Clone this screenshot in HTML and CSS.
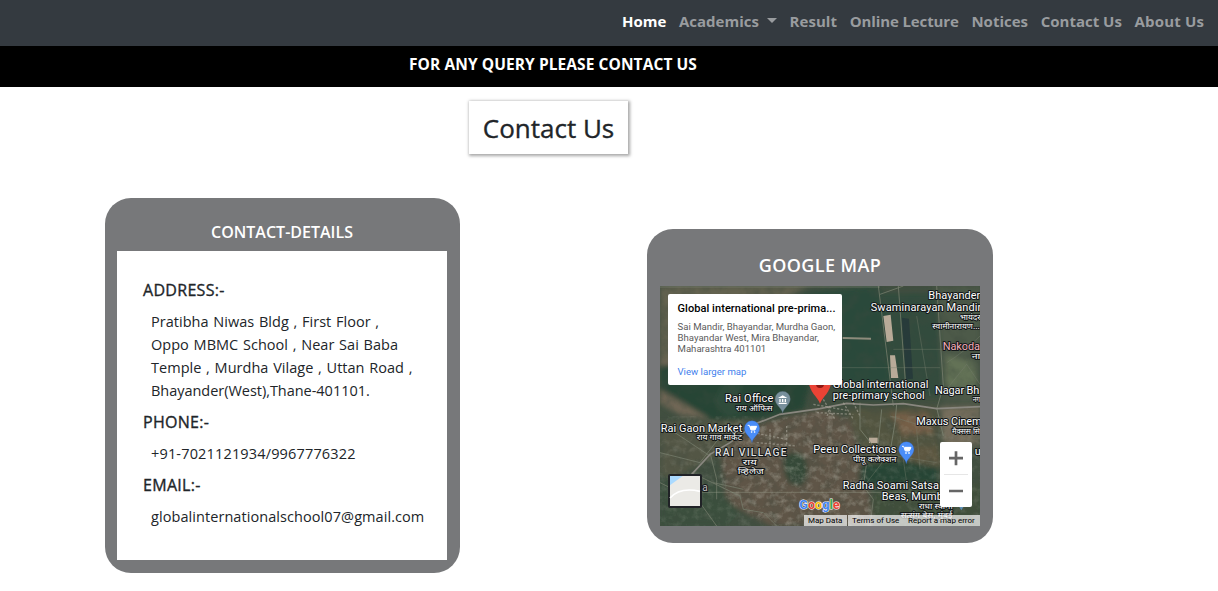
FILE: index.html
```html
<!DOCTYPE html>
<html lang="en">
<head>
<meta charset="utf-8">
<title>Contact Us</title>
<link rel="stylesheet" href="styles.css">
</head>
<body>
<nav class="navbar">
  <a class="nav-link active">Home</a>
  <a class="nav-link dropdown">Academics</a>
  <a class="nav-link result">Result</a>
  <a class="nav-link lecture">Online Lecture</a>
  <a class="nav-link notices">Notices</a>
  <a class="nav-link contact">Contact Us</a>
  <a class="nav-link about">About Us</a>
</nav>
<div class="banner"><span>FOR ANY QUERY PLEASE CONTACT US</span></div>
<main class="page">
  <h2 class="title">Contact Us</h2>
  <div class="cards">
    <section class="card details">
      <h5 class="card-title">CONTACT-DETAILS</h5>
      <div class="details-body">
        <h6 class="label">ADDRESS:-</h6>
        <p class="text address">Pratibha Niwas Bldg , First Floor ,<br>Oppo MBMC School , Near Sai Baba<br>Temple , Murdha Vilage , Uttan Road ,<br><span class="city">Bhayander(West),Thane-401101.</span></p>
        <h6 class="label">PHONE:-</h6>
        <p class="text phone">+91-7021121934/9967776322</p>
        <h6 class="label">EMAIL:-</h6>
        <p class="text email">globalinternationalschool07@gmail.com</p>
      </div>
    </section>
    <section class="card map-card">
      <h5 class="card-title map-title">GOOGLE MAP</h5>
      <div class="map">
        <svg class="map-svg" viewBox="0 0 960 720" width="320" height="240">
          <defs>
            <filter id="soft" x="-10%" y="-10%" width="120%" height="120%"><feGaussianBlur stdDeviation="8"/></filter>
            <filter id="rough" x="0" y="0" width="100%" height="100%">
              <feTurbulence type="fractalNoise" baseFrequency="0.025" numOctaves="5" seed="7"/>
              <feColorMatrix values="0 0 0 0 0.05  0 0 0 0 0.07  0 0 0 0 0.05  2.2 0 0 0 -0.9"/>
            </filter>
            <filter id="grain" x="0" y="0" width="100%" height="100%">
              <feTurbulence type="fractalNoise" baseFrequency="0.05" numOctaves="4" seed="3"/>
              <feColorMatrix values="0 0 0 0 0.6  0 0 0 0 0.6  0 0 0 0 0.52  0 2 0 0 -0.9"/>
            </filter>
            <clipPath id="brown"><path d="M270 420 480 370 570 400 620 560 640 720 330 720 200 650 170 520z"/></clipPath>
            <g id="cart" fill="none" stroke="#fff" stroke-width="3"><path d="M-13-10h5l5 14h12l5-11h-18"/><path d="M-5-6h17l-3 8H-3z" fill="#fff"/><circle cx="-1" cy="10" r="1.5"/><circle cx="8" cy="10" r="1.5"/></g>
            <path id="pin" d="M0 42C-3 25-23 17-23-1a23 23 0 0 1 46 0C23 17 3 25 0 42z"/>
          </defs>
          <rect width="960" height="720" fill="#414f40"/>
          <g filter="url(#soft)">
            <path d="M0 0H450L380 30 0 290z" fill="#64624f"/>
            <path d="M0 220 60 235 30 300 180 400 60 390 0 350z" fill="#6f6655"/>
            <path d="M0 240 330 200 450 300 430 370 290 400 170 410 0 310z" fill="#264534"/>
            <path d="M190 290h60l-20 60 30 30-60 15-40-50z" fill="#2f4b3a"/>
            <path d="M410 20 660 0 700 340 540 340 540 60z" fill="#2c4a3a"/>
            <path d="M660 20H830L850 330 710 330z" fill="#304c3d"/>
            <path d="M830 0H960V350H850z" fill="#4d5a48"/>
            <path d="M860 210 940 230 950 310 860 300z" fill="#637257"/>
            <path d="M0 410 290 400 170 510 0 600z" fill="#525645"/>
            <path d="M270 420 480 370 570 400 620 560 640 720 330 720 200 650 180 500z" fill="#5e5546"/>
            <path d="M560 370 830 360 840 500 650 560 610 500z" fill="#525440"/>
            <path d="M690 380h110l20 60-90 10z" fill="#745e47"/>
            <path d="M720 480h110l20 60H740z" fill="#5b563f"/>
            <path d="M600 540 720 520 830 545 830 590 600 600z" fill="#274536"/>
            <path d="M370 510q60-30 70 20t-20 70q-55 0-50-90z" fill="#344a39"/>
            <path d="M0 570 160 590 240 680 200 720H0z" fill="#3a503c"/>
            <path d="M640 620 960 590V720H640z" fill="#414f3b"/>
            <path d="M840 360H960V480H850z" fill="#746d5c"/>
          </g>
          <rect width="960" height="720" filter="url(#rough)" opacity=".4"/>
          <g clip-path="url(#brown)"><rect width="960" height="720" filter="url(#grain)" opacity=".25"/></g>
          <rect y="390" width="960" height="330" filter="url(#grain)" opacity=".17"/>
          <g fill="#b8aa98">
            <path d="M670 90l22-4 8 78-20 4zM690 208h15l10 68h-22z"/>
            <path d="M627 455h26v16h-26z"/>
            <path d="M548 153l85 2v6l-85-2z" opacity=".7"/>
          </g>
          <path d="M725 95l22 3 12 180-20 2z" fill="#1f3138" opacity=".6"/>
          <g fill="none" stroke="#79806f" stroke-width="3">
            <path d="M655 0 690 280 700 360M715 0 740 340M830 0 850 300 830 370M660 25 730 0" opacity=".75"/>
            <path d="M540 245H840M700 190H850M770 90 810 330M860 230q50-30 100-80M860 310l60-75 40 60" opacity=".4"/>
            <path d="M600 350 600 430 640 480M665 370 655 470 640 500M710 355 705 410 690 500M830 365 850 450" opacity=".85"/>
            <path d="M690 390 820 430M650 500 830 530M720 450 740 590M770 430 780 550M690 500 620 590" opacity=".4"/>
            <path d="M0 410 150 510M0 500 120 530 190 440M150 500 170 580 170 640M95 560 240 630 250 670 310 680 350 720M620 530 610 600 640 640 630 720M160 590 250 610M0 590 120 650 170 720" opacity=".7"/>
          </g>
          <path d="M0 3H660M110 619H840" stroke="#a6aa98" stroke-width="2" opacity=".55"/>
          <path d="M95 565 150 505 210 470 290 412 360 385 480 368 560 352 640 357 730 353 830 368 960 362" fill="none" stroke="#89877f" stroke-width="5"/>
          <path d="M460 355l100 18M490 340l35 60M550 350l30 50M510 360l-10 35M580 350l20 40M470 380l110 5M280 440l100 20M290 470l120 10M330 430v60M380 420v60" stroke="#a9a69a" stroke-width="4" stroke-dasharray="7 5" opacity=".6"/>

          <path d="M480 353C474 333 447 318 447 287H513C513 318 486 333 480 353z" fill="#ea4335"/>
          <circle cx="480" cy="294" r="12" fill="#8c1713"/>
          <g fill="#78909c" stroke="#475861" stroke-width="1"><use href="#pin" x="368" y="340"/></g>
          <path d="M354 336 368 328 382 336zM356 350h24v4h-24zM358 339h4v9h-4zM366 339h4v9h-4zM374 339h4v9h-4z" fill="#fff"/>
          <g fill="#4a8df8" stroke="#2f5fae" stroke-width="1"><use href="#pin" x="276" y="428"/><use href="#pin" x="739" y="491"/></g>
          <use href="#cart" x="276" y="428"/><use href="#cart" x="739" y="491"/>

          <g class="place">
            <text x="805" y="40" textLength="156">Bhayander</text>
            <text x="632" y="74" textLength="332">Swaminarayan Mandir</text>
            <text x="848" y="192" textLength="112" class="pink">Nakoda</text>
            <text x="518" y="306" textLength="287">Global international</text>
            <text x="518" y="340" textLength="276">pre-primary school</text>
            <text x="825" y="324" textLength="133">Nagar Bh</text>
            <text x="195" y="348" textLength="145">Rai Office</text>
            <text x="2" y="437" textLength="245">Rai Gaon Market</text>
            <text x="165" y="510" textLength="215" class="village">RAI VILLAGE</text>
            <text x="460" y="502" textLength="249">Peeu Collections</text>
            <text x="769" y="417" textLength="196">Maxus Cinem</text>
            <text x="548" y="609" textLength="289">Radha Soami Satsa</text>
            <text x="665" y="643" textLength="184">Beas, Mumb</text>
            <text x="127" y="615" class="plain">a</text>
            <text x="944" y="506">u</text>
          </g>
          <g class="place hindi">
            <text x="900" y="102" textLength="62" lengthAdjust="spacingAndGlyphs">भायंदर</text>
            <text x="817" y="129" textLength="142" lengthAdjust="spacingAndGlyphs">स्वामीनारायण...</text>
            <text x="935" y="219" textLength="26" lengthAdjust="spacingAndGlyphs">ना</text>
            <text x="938" y="348" textLength="22" lengthAdjust="spacingAndGlyphs">नग</text>
            <text x="228" y="375" textLength="110" lengthAdjust="spacingAndGlyphs">राय ऑफिस</text>
            <text x="110" y="462" textLength="136" lengthAdjust="spacingAndGlyphs">राय गाव मार्केट</text>
            <text x="248" y="536" textLength="42" lengthAdjust="spacingAndGlyphs">राय</text>
            <text x="233" y="563" textLength="78" lengthAdjust="spacingAndGlyphs">व्हिलेज</text>
            <text x="579" y="527" textLength="130" lengthAdjust="spacingAndGlyphs">पीयू कलेक्शन</text>
            <text x="876" y="444" textLength="84" lengthAdjust="spacingAndGlyphs">मैक्सस सि</text>
            <text x="776" y="670" textLength="102" lengthAdjust="spacingAndGlyphs">राधा स्वामी</text>
            <text x="722" y="697" textLength="155" lengthAdjust="spacingAndGlyphs">सत्संग बेस, मुंबई</text>
          </g>
          <path d="M898 663h12l-6 10z" fill="#5d8fb5"/>
          <text class="logo" x="418" y="670" textLength="121" lengthAdjust="spacingAndGlyphs"><tspan fill="#4285f4">G</tspan><tspan fill="#ea4335">o</tspan><tspan fill="#fbbc05">o</tspan><tspan fill="#4285f4">g</tspan><tspan fill="#34a853">l</tspan><tspan fill="#ea4335">e</tspan></text>
          <rect x="24" y="564" width="102" height="102" rx="6" fill="#202226"/>
          <path d="M30 570h90v90H30z" fill="#ebeae6"/>
          <path d="M30 570h38L30 598z" fill="#aadaff"/>
          <path d="M30 636Q60 602 120 616" fill="none" stroke="#fff" stroke-width="5"/>
        </svg>
        <div class="info">
          <div class="info-name">Global international pre-prima...</div>
          <div class="info-address">Sai Mandir, Bhayandar, Murdha Gaon,<br>Bhayandar West, Mira Bhayandar,<br>Maharashtra 401101</div>
          <a class="info-link">View larger map</a>
        </div>
        <div class="zoom">
          <svg viewBox="0 0 32 65" width="32" height="65"><path d="M9 16.200h14M16 9.200v14M9 49h14" stroke="#666" stroke-width="2.700" fill="none"/><path d="M4 32.500h24" stroke="#e6e6e6"/></svg>
        </div>
        <div class="legal"><span class="lg1">Map Data</span><span class="lg2">Terms of Use</span><span class="lg3">Report a map error</span></div>
      </div>
    </section>
  </div>
</main>
</body>
</html>
```
FILE: styles.css
```css
* { box-sizing: border-box; }
body {
  margin: 0;
  height: 591px;
  overflow: hidden;
  background: #fff;
  color: #212529;
  font-family: "Open Sans", "Noto Sans", sans-serif;
}
h2, h5, h6, p { margin: 0; }

.navbar {
  display: flex;
  justify-content: flex-end;
  gap: 12.700px;
  height: 46px;
  padding: 9px 14px 0 0;
  background: #343a40;
}
.nav-link {
  font-size: 15px;
  line-height: 24px;
  font-weight: 700;
  color: #999c9f;
  white-space: nowrap;
}
.nav-link.active { color: #fff; }
.nav-link.result { letter-spacing: .05px; }
.nav-link.lecture { letter-spacing: -.12px; }
.nav-link.about { letter-spacing: .15px; }
.dropdown::after {
  content: "";
  display: inline-block;
  margin-left: 8px;
  vertical-align: 4px;
  border: 5px solid transparent;
  border-top-color: currentColor;
  border-bottom: 0;
}

.banner {
  height: 41px;
  padding: 6px 0 0 409px;
  background: #000;
  color: #fff;
  font-size: 15.500px;
  line-height: 24px;
  font-weight: 700;
  letter-spacing: .08px;
  white-space: nowrap;
}

.page { padding-top: 14px; }
.title {
  width: 159px;
  height: 53px;
  margin-left: 469px;
  font-size: 26px;
  line-height: 55px;
  font-weight: 400;
  -webkit-text-stroke: .35px #212529;
  text-align: center;
  white-space: nowrap;
  background: #fff;
  box-shadow: 1px 1px 3px 1px rgba(0, 0, 0, .35);
}

.cards {
  display: flex;
  align-items: flex-start;
  gap: 187px;
  padding: 44px 0 0 105px;
}
.card {
  background: #77787a;
  border-radius: 26px;
}
.card-title {
  color: #fff;
  font-weight: 600;
  text-align: center;
}
.details {
  width: 355px;
  height: 375px;
  padding: 23px 13px 13px 12px;
}
.details .card-title {
  height: 30px;
  font-size: 16px;
  line-height: 22px;
}
.details-body {
  height: 309px;
  padding: 28px 0 0 26px;
  background: #fff;
}
.label {
  font-size: 16px;
  line-height: 22px;
  font-weight: 400;
  -webkit-text-stroke: .35px #212529;
  letter-spacing: .3px;
}
.text {
  padding: 9px 0 9px 8px;
  font-size: 14.500px;
  line-height: 23px;
  white-space: nowrap;
}
.address { word-spacing: .9px; letter-spacing: .03px; }
.city { letter-spacing: -.03px; }
.phone { letter-spacing: .16px; }
.email { letter-spacing: .07px; }

.map-card {
  width: 346px;
  height: 314px;
  margin-top: 31px;
  padding: 24px 13px 17px;
}
.map-title {
  height: 33px;
  font-size: 18px;
  line-height: 24px;
  letter-spacing: .4px;
}
.map {
  position: relative;
  width: 320px;
  height: 240px;
  overflow: hidden;
  font-family: Roboto, sans-serif;
}
.map-svg { display: block; }
.place text {
  font-family: Roboto, "Noto Sans", sans-serif;
  font-size: 33px;
  fill: #fff;
  stroke: #15191a;
  stroke-width: 6px;
  stroke-linejoin: round;
  paint-order: stroke;
}
.place .pink { fill: #f4aeba; }
.place .village { font-size: 31px; font-weight: 500; fill: #dedede; }
.place .plain { fill: #bbb; font-size: 30px; }
.hindi text {
  font-family: "Noto Sans Devanagari", "Noto Sans", sans-serif;
  font-size: 25px;
}
.logo {
  font-family: Roboto, sans-serif;
  font-size: 40px;
  font-weight: 700;
  stroke: #fff;
  stroke-width: 3px;
  paint-order: stroke;
}

.info {
  position: absolute;
  left: 8px;
  top: 8px;
  width: 174px;
  height: 91px;
  padding: 8px 0 0 9.500px;
  background: #fff;
  border-radius: 2px;
  white-space: nowrap;
}
.info-name { font-size: 11px; line-height: 14px; font-weight: 500; letter-spacing: .06px; color: #000; }
.info-address { margin-top: 5px; font-size: 9.600px; line-height: 11px; color: #5b5b5b; }
.info-link { display: block; margin-top: 12px; font-size: 9.600px; line-height: 11px; color: #427fed; }
.zoom {
  position: absolute;
  left: 280px;
  top: 156px;
  width: 32px;
  height: 65px;
  background: #fff;
  border-radius: 2px;
}
.zoom svg { display: block; }
.legal {
  position: absolute;
  right: 0;
  bottom: 0;
  display: flex;
  height: 11px;
  font-size: 8px;
  line-height: 11px;
  color: #000;
  white-space: nowrap;
}
.legal span { background: rgba(245, 245, 245, .72); }
.lg1 { width: 43px; padding-left: 4px; }
.lg2 { width: 57px; margin-left: 1px; padding-left: 4px; }
.lg3 { width: 75px; padding-left: 3px; }
```
